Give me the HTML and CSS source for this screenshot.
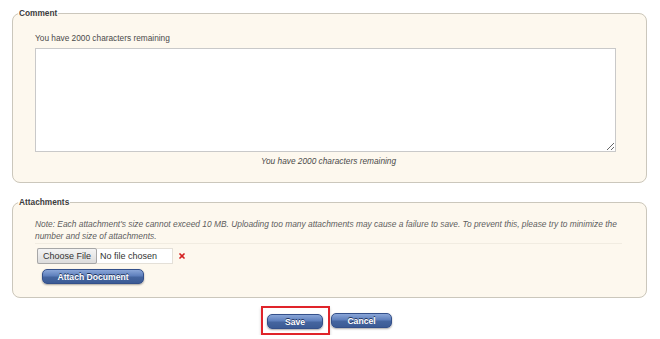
FILE: index.html
```html
<!DOCTYPE html>
<html lang="en">
<head>
    <meta charset="UTF-8">
    <title>Comment</title>
    <link rel="stylesheet" href="styles.css">
</head>
<body>

<!-- コメント -->
<fieldset class="panel">
    <legend>Comment</legend>
    <div class="remaining">You have 2000 characters remaining</div>
    <textarea class="comment-box"></textarea>
    <div class="remaining remaining-bottom">You have 2000 characters remaining</div>
</fieldset>

<!-- 添付ファイル -->
<fieldset class="panel attachments">
    <legend>Attachments</legend>
    <div class="note">Note: Each attachment's size cannot exceed 10 MB. Uploading too many attachments may cause a failure to save. To prevent this, please try to minimize the number and size of attachments.</div>
    <div class="file-row">
        <span class="file-input">
            <span class="file-button">Choose File</span>
            <span class="file-name">No file chosen</span>
        </span>
        <svg class="remove" width="6" height="6" viewBox="0 0 6 6">
            <path d="M1 1 L5 5 M5 1 L1 5" stroke="#d42020" stroke-width="1.7" stroke-linecap="round"/>
        </svg>
    </div>
    <button class="btn attach-btn">Attach Document</button>
</fieldset>

<div class="actions">
    <span class="highlight"><button class="btn action-btn">Save</button></span>
    <button class="btn action-btn">Cancel</button>
</div>

</body>
</html>
```

FILE: styles.css
```css
body {
    font-family: "Liberation Sans", Arial, sans-serif;
    font-size: 8.3px;
    color: #4a4a4a;
    margin: 8px 13px 0 12px;
    background: #fff;
}
.panel {
    margin: 0;
    padding: 15px 24px 16px 22px;
    border: 1px solid #cbc7bc;
    border-radius: 8px;
    background-color: #fdf8ee;
}
.panel legend {
    font-weight: bold;
    font-size: 8.3px;
    line-height: 10px;
    color: #3c3c3c;
    margin-left: -17px;
    padding: 0 1px;
}
.remaining {
    line-height: 10px;
}
.comment-box {
    display: block;
    box-sizing: border-box;
    width: 581px;
    height: 104px;
    margin: 5px 0 4px 0;
    border: 1px solid #c9c9c9;
    background: #fff;
    padding: 2px;
}
.remaining-bottom {
    font-style: italic;
    text-align: center;
}

.attachments {
    margin-top: 14px;
    padding-top: 11px;
    padding-bottom: 13px;
}
.note {
    font-style: italic;
    font-size: 8.4px;
    color: #5e5e5e;
    line-height: 12px;
    padding-bottom: 1px;
    border-bottom: 1px solid #f1ece1;
}
.file-row {
    display: flex;
    align-items: center;
    gap: 6px;
    margin-top: 4px;
    margin-left: 2px;
}
.file-input {
    display: flex;
    height: 16px;
    box-sizing: border-box;
    width: 136px;
    background: #fff;
    border: 1px solid #e4e0d8;
    border-left: none;
    font-size: 9px;
    color: #333;
}
.file-button {
    display: flex;
    align-items: center;
    box-sizing: border-box;
    padding: 0 5px;
    border: 1px solid #a7a7a7;
    border-radius: 2px;
    background: linear-gradient(#f4f4f4, #dcdcdc);
    margin: -1px 0 -1px 0;
    height: 16px;
}
.file-name {
    display: flex;
    align-items: center;
    padding-left: 3px;
}
.btn {
    font-family: "Liberation Sans", Arial, sans-serif;
    font-weight: bold;
    font-size: 8.6px;
    color: #fff;
    text-shadow: 0 -1px 0 #1f335c;
    border: 1px solid #34508a;
    border-radius: 5px;
    background: linear-gradient(#8aa6d8, #5e7fbc 45%, #45659f 55%, #3b5b95);
    box-shadow: 0 1px 2px rgba(0, 0, 0, 0.35);
    cursor: pointer;
    padding: 0;
    height: 15px;
}
.attach-btn {
    display: block;
    width: 102px;
    margin: 5px 0 0 7px;
}

.actions {
    display: flex;
    justify-content: center;
    align-items: center;
    margin: 8px 6px 0 0;
}
.highlight {
    display: inline-flex;
    padding: 6px 5px 4px 4px;
    border: 2px solid #e0242a;
    box-shadow: 0 2px 3px rgba(0, 0, 0, 0.2);
}
.action-btn {
    width: 56px;
}
.actions > .action-btn {
    width: 61px;
    margin-left: 1px;
}
```
